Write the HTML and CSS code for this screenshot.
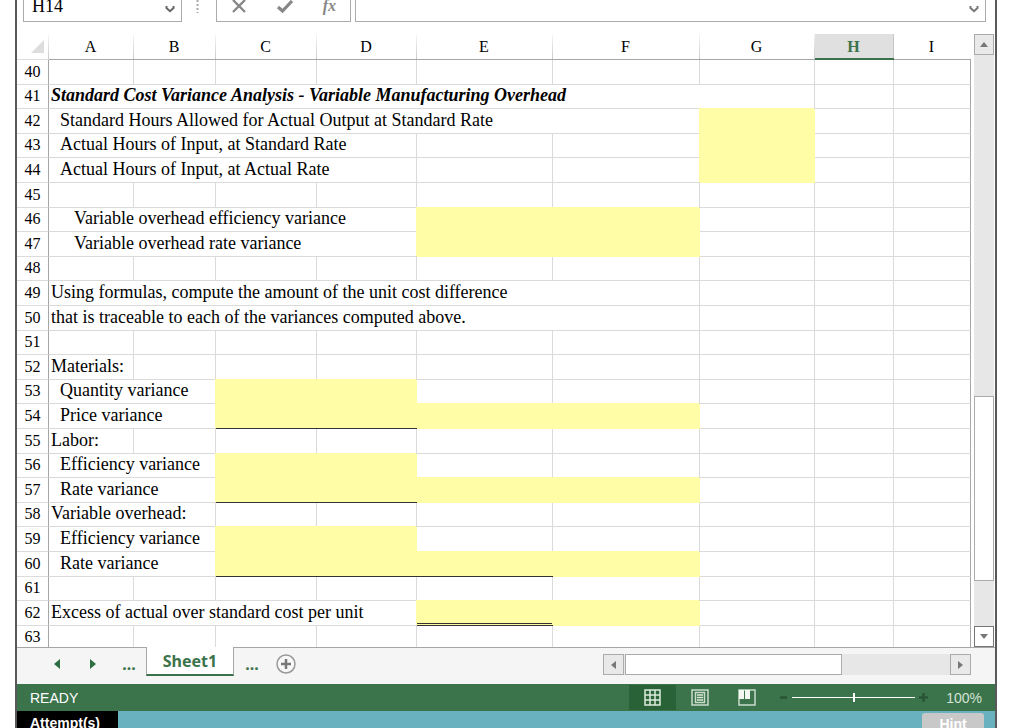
FILE: index.html
```
<!DOCTYPE html>
<html lang="en">
<head>
<meta charset="utf-8">
<title>Sheet1</title>
<meta name="viewport" content="width=device-width, initial-scale=1">
<link rel="stylesheet" href="styles.css">
</head>
<body>
<main class="window">
  <div class="formula-bar">
    <div class="name-box">
      <input class="name-input" type="text" value="H14" aria-label="Name box">
      <button class="drop" aria-label="Name list"><svg width="10" height="8" viewBox="0 0 10 8"><path d="M1.5 1v2L5 6.2 8.5 3V1" fill="none" stroke="#666" stroke-width="2"/></svg></button>
    </div>
    <svg class="grip" width="3" height="30" viewBox="0 0 3 30"><path d="M1.5 0v21" stroke="#aaa" stroke-width="2" stroke-dasharray="2 2"/></svg>
    <div class="actions">
      <button aria-label="Cancel"><svg width="16" height="16" viewBox="0 0 16 16"><path d="M2 2l12 12M14 2L2 14" stroke="#888" stroke-width="2.4"/></svg></button>
      <button aria-label="Enter"><svg width="18" height="16" viewBox="0 0 18 16"><path d="M2 9l4.500 4L16 3" fill="none" stroke="#888" stroke-width="3.200"/></svg></button>
      <button class="fx" aria-label="Insert function">fx</button>
    </div>
    <div class="formula">
      <input class="formula-input" type="text" aria-label="Formula">
      <button class="drop" aria-label="Expand formula bar"><svg width="10" height="8" viewBox="0 0 10 8"><path d="M1.500 1v2L5 6.200 8.500 3V1" fill="none" stroke="#777" stroke-width="2"/></svg></button>
    </div>
  </div>

  <div class="work">
    <div class="pane">
      <table class="sheet">
        <colgroup><col class="c-num"><col class="c-a"><col class="c-b"><col class="c-c"><col class="c-d"><col class="c-e"><col class="c-f"><col class="c-g"><col class="c-h"><col></colgroup>
        <thead>
          <tr><th class="corner"><svg width="13" height="13" viewBox="0 0 13 13"><path d="M13 0v13H0z" fill="#ddd"/></svg></th><th>A</th><th>B</th><th>C</th><th>D</th><th>E</th><th>F</th><th>G</th><th class="active">H</th><th>I</th></tr>
        </thead>
        <tbody>
          <tr><th>40</th><td></td><td></td><td></td><td></td><td></td><td></td><td></td><td></td><td></td></tr>
          <tr><th>41</th><td colspan="7" class="title">Standard Cost Variance Analysis - Variable Manufacturing Overhead</td><td></td><td></td></tr>
          <tr><th>42</th><td colspan="6" class="in1">Standard Hours Allowed for Actual Output at Standard Rate</td><td class="fill"></td><td></td><td></td></tr>
          <tr><th>43</th><td colspan="4" class="in1">Actual Hours of Input, at Standard Rate</td><td></td><td></td><td class="fill"></td><td></td><td></td></tr>
          <tr><th>44</th><td colspan="4" class="in1">Actual Hours of Input, at Actual Rate</td><td></td><td></td><td class="fill"></td><td></td><td></td></tr>
          <tr><th>45</th><td></td><td></td><td></td><td></td><td></td><td></td><td></td><td></td><td></td></tr>
          <tr><th>46</th><td colspan="4" class="in2">Variable overhead efficiency variance</td><td class="fill"></td><td class="fill"></td><td></td><td></td><td></td></tr>
          <tr><th>47</th><td colspan="4" class="in2">Variable overhead rate variance</td><td class="fill"></td><td class="fill"></td><td></td><td></td><td></td></tr>
          <tr><th>48</th><td></td><td></td><td></td><td></td><td></td><td></td><td></td><td></td><td></td></tr>
          <tr><th>49</th><td colspan="6">Using formulas, compute the amount of the unit cost difference</td><td></td><td></td><td></td></tr>
          <tr><th>50</th><td colspan="6">that is traceable to each of the variances computed above.</td><td></td><td></td><td></td></tr>
          <tr><th>51</th><td></td><td></td><td></td><td></td><td></td><td></td><td></td><td></td><td></td></tr>
          <tr><th>52</th><td>Materials:</td><td></td><td></td><td></td><td></td><td></td><td></td><td></td><td></td></tr>
          <tr><th>53</th><td colspan="2" class="in1">Quantity variance</td><td class="fill"></td><td class="fill"></td><td></td><td></td><td></td><td></td><td></td></tr>
          <tr><th>54</th><td colspan="2" class="in1">Price variance</td><td class="fill sum"></td><td class="fill sum"></td><td class="fill"></td><td class="fill"></td><td></td><td></td><td></td></tr>
          <tr><th>55</th><td>Labor:</td><td></td><td></td><td></td><td></td><td></td><td></td><td></td><td></td></tr>
          <tr><th>56</th><td colspan="2" class="in1">Efficiency variance</td><td class="fill"></td><td class="fill"></td><td></td><td></td><td></td><td></td><td></td></tr>
          <tr><th>57</th><td colspan="2" class="in1">Rate variance</td><td class="fill sum"></td><td class="fill sum"></td><td class="fill"></td><td class="fill"></td><td></td><td></td><td></td></tr>
          <tr><th>58</th><td colspan="2">Variable overhead:</td><td></td><td></td><td></td><td></td><td></td><td></td><td></td></tr>
          <tr><th>59</th><td colspan="2" class="in1">Efficiency variance</td><td class="fill"></td><td class="fill"></td><td></td><td></td><td></td><td></td><td></td></tr>
          <tr><th>60</th><td colspan="2" class="in1">Rate variance</td><td class="fill sum"></td><td class="fill sum"></td><td class="fill sum"></td><td class="fill"></td><td></td><td></td><td></td></tr>
          <tr><th>61</th><td></td><td></td><td></td><td></td><td></td><td></td><td></td><td></td><td></td></tr>
          <tr><th>62</th><td colspan="4">Excess of actual over standard cost per unit</td><td class="fill total"></td><td class="fill"></td><td></td><td></td><td></td></tr>
          <tr><th>63</th><td></td><td></td><td></td><td></td><td></td><td></td><td></td><td></td><td></td></tr>
        </tbody>
      </table>
    </div>
    <div class="vscroll">
      <button class="sb" aria-label="Scroll up"><svg width="8" height="5" viewBox="0 0 8 5"><path d="M0 5l4-5 4 5z" fill="#777"/></svg></button>
      <div class="vtrack"><div class="space-before"></div><div class="thumb"></div><div class="space-after"></div></div>
      <button class="sb end" aria-label="Scroll down"><svg width="8" height="5" viewBox="0 0 8 5"><path d="M0 0l4 5 4-5z" fill="#777"/></svg></button>
    </div>
  </div>

  <div class="tabs">
    <nav class="tab-nav">
      <button class="arrow" aria-label="Previous sheet"><svg width="6" height="10" viewBox="0 0 6 10"><path d="M6 0v10L0 5z" fill="#2f6e42"/></svg></button>
      <button class="arrow" aria-label="Next sheet"><svg width="6" height="10" viewBox="0 0 6 10"><path d="M0 0v10l6-5z" fill="#2f6e42"/></svg></button>
      <button class="more">...</button>
      <button class="tab">Sheet1</button>
      <button class="more">...</button>
      <button class="add" aria-label="New sheet"><svg width="20" height="20" viewBox="0 0 20 20"><circle cx="10" cy="10" r="9" fill="#f8f8f8" stroke="#999" stroke-width="1.500"/><path d="M10 5v10M5 10h10" stroke="#777" stroke-width="2.500"/></svg></button>
    </nav>
    <div class="hscroll">
      <button class="sb" aria-label="Scroll left"><svg width="5" height="8" viewBox="0 0 5 8"><path d="M5 0v8L0 4z" fill="#777"/></svg></button>
      <div class="htrack"><div class="thumb"></div></div>
      <button class="sb" aria-label="Scroll right"><svg width="5" height="8" viewBox="0 0 5 8"><path d="M0 0v8l5-4z" fill="#777"/></svg></button>
    </div>
  </div>

  <div class="status">
    <span class="ready">READY</span>
    <div class="views">
      <button class="on" aria-label="Normal view"><svg width="17" height="17" viewBox="0 0 17 17"><path d="M1 1h15v15H1zM6 1v15M11 1v15M1 6h15M1 11h15" fill="none" stroke="#dcebdc" stroke-width="1.500"/></svg></button>
      <button aria-label="Page layout"><svg width="18" height="17" viewBox="0 0 18 17"><path d="M1 1h16v15H1zM4.500 3.500h9v10h-9z" fill="none" stroke="#c9dccb" stroke-width="1.500"/><path d="M6 6h6M6 8.500h6M6 11h6" stroke="#dcebdc" stroke-width="1.300"/></svg></button>
      <button aria-label="Page break preview"><svg width="18" height="17" viewBox="0 0 18 17"><path d="M1 1h16v15H1z" fill="none" stroke="#c9dccb" stroke-width="1.500"/><path d="M1 1h5v9H1zM7 1h5v9H7z" fill="#f2f7f2"/></svg></button>
    </div>
    <div class="zoom">
      <button aria-label="Zoom out"><svg width="9" height="9" viewBox="0 0 9 9"><path d="M1 4.500h7" stroke="#285635" stroke-width="2.500"/></svg></button>
      <input type="range" min="0" max="100" value="50" aria-label="Zoom">
      <button aria-label="Zoom in"><svg width="9" height="9" viewBox="0 0 9 9"><path d="M0 4.500h9M4.500 0v9" stroke="#285635" stroke-width="2.500"/></svg></button>
    </div>
    <span class="percent">100%</span>
  </div>

  <div class="footer">
    <span class="attempts">Attempt(s)</span>
    <button class="hint">Hint</button>
  </div>
</main>
</body>
</html>
```
FILE: styles.css
```
* { box-sizing: border-box; }
body { margin: 0; background: #fff; color: #000; font-family: "Liberation Serif", "Times New Roman", serif; }
button { border: 0; padding: 0; background: none; font: inherit; color: inherit; display: flex; align-items: center; justify-content: center; cursor: pointer; }
input { border: 0; padding: 0; margin: 0; background: none; font: inherit; min-width: 0; outline: 0; }
svg { display: block; flex: none; }

.window { height: 100vh; margin: 0 27px 0 15px; border: solid #58595b; border-width: 0 2px 0 2px; display: flex; flex-direction: column; overflow: hidden; }

.formula-bar { flex: none; height: 22px; display: flex; align-items: flex-end; overflow: hidden; padding: 0 9px 0 6px; }
.name-box, .actions, .formula { height: 32px; border: 1px solid #ababab; display: flex; align-items: center; }
.name-box { width: 159px; padding: 0 6px 0 8px; }
.name-input { flex: 1; font-size: 18px; }
.name-box .drop, .formula .drop { padding-top: 5px; }
.grip { margin: 0 17px 0 14px; }
.actions { width: 135px; justify-content: space-between; padding: 0 14px; }
.fx { font-size: 16px; font-weight: bold; font-style: italic; color: #888; }
.formula { flex: 1; margin-left: 4px; padding-right: 6px; }
.formula-input { flex: 1; }

.work { flex: 1; min-height: 0; display: flex; gap: 3px; padding-top: 12px; padding-right: 1px; }
.pane { flex: 1; min-width: 0; overflow: hidden; }
.sheet { width: 100%; table-layout: fixed; border-collapse: separate; border-spacing: 0; }
.c-num { width: 32px; }
.c-a { width: 85px; }
.c-b { width: 82px; }
.c-c { width: 101px; }
.c-d { width: 100px; }
.c-e { width: 136px; }
.c-f { width: 147px; }
.c-g { width: 115px; }
.c-h { width: 79px; }
.sheet th { font-weight: normal; font-size: 16px; line-height: 20px; padding: 0; text-align: center; }
.sheet thead th { height: 26px; padding-right: 2px; border-bottom: 1px solid #a6a6a6; background: linear-gradient(#f6f6f6, #ccc) right / 1px 100% no-repeat; }
.sheet thead th:last-child { background: none; }
.sheet thead .corner { border-bottom-color: #ddd; }
.corner svg { margin: 0 3px 0 auto; }
.sheet thead .active { background: #e0e0e0; color: #3b734b; font-weight: bold; box-shadow: inset 0 -1px 0 #3b734b, inset -1px 0 0 #c6c6c6; border-bottom-color: #3b734b; }
.sheet tbody tr { height: 25px; }
.sheet tbody tr:nth-child(5n+2), .sheet tbody tr:nth-child(5n+4) { height: 24px; }
.sheet tbody th { border: solid #dcdcdc; border-width: 0 1px 1px 0; border-right-color: #a6a6a6; padding-bottom: 1px; }
.sheet td { border: solid #dadada; border-width: 0 1px 1px 0; padding: 0 0 3px 2px; font-size: 18px; line-height: 20px; white-space: nowrap; }
.sheet td:last-child { border-right-color: #a6a6a6; }
.sheet .title { font-weight: bold; font-style: italic; }
.sheet .in1 { padding-left: 11px; }
.sheet .in2 { padding-left: 25px; }
.sheet .fill { background: #fffda6; border-color: #fffda6; box-shadow: -1px -1px 0 #fffda6; }
.sheet .sum { border-right-width: 0; border-bottom-color: #333; }
.sheet .total { border-right-width: 0; border-bottom: 3px double #333; }

.sb { flex: none; width: 21px; height: 21px; border: 1px solid #ababab; background: #e9e9e9; }
.sb.end { background: #fff; border-color: #777; }
.thumb { background: #fff; border: 1px solid #ababab; }
.vscroll { flex: none; width: 20px; display: flex; flex-direction: column; background: #e7e7e7; }
.vscroll .sb { width: 100%; }
.vtrack { flex: 1; display: flex; flex-direction: column; }
.space-before { flex: 342; }
.vtrack .thumb { flex: 184; }
.space-after { flex: 45; }

.tabs { flex: none; height: 37px; background: #f5f5f5; border-top: 1px solid #a6a6a6; display: flex; justify-content: space-between; padding-right: 24px; color: #3b734b; }
.tab-nav { display: flex; align-items: flex-start; padding-left: 37px; font-family: "Noto Sans", "Open Sans", sans-serif; font-weight: bold; }
.arrow { width: 6px; height: 32px; margin-right: 30px; }
.more { width: 14px; height: 32px; font-size: 16px; }
.arrow + .more { margin: 0 10px 0 0; }
.arrow:nth-child(2) { margin-right: 26px; }
.tab { width: 88px; height: 29px; margin-top: -1px; background: #fff; border: solid #a6a6a6; border-width: 0 1px 2px 1px; border-bottom-color: #3b734b; font-size: 16px; line-height: 20px; }
.tab + .more { margin: 0 17px 0 11px; }
.add { height: 32px; }
.hscroll { width: 368px; height: 21px; margin-top: 6px; display: flex; background: #e7e7e7; }
.htrack { flex: 1; display: flex; padding-left: 1px; }
.htrack .thumb { width: 217px; }

.status { flex: none; height: 27px; background: #3b734b; color: #fff; display: flex; align-items: center; padding: 0 13px; font-family: "Liberation Sans", Arial, sans-serif; font-size: 14px; }
.ready { flex: 1; }
.views { display: flex; }
.views button { width: 47px; height: 25px; }
.views .on { background: #2a6237; }
.zoom { display: flex; align-items: center; gap: 4px; margin: 0 18px 0 9px; }
.zoom input { appearance: none; width: 123px; height: 9px; background: linear-gradient(#fff, #fff) center / 100% 1px no-repeat; }
.zoom input::-webkit-slider-thumb { appearance: none; width: 2px; height: 9px; background: #fff; }
.percent { color: #d3e3d6; }

.footer { flex: none; height: 17px; background: #69b1bf; color: #fff; display: flex; align-items: flex-start; justify-content: space-between; overflow: hidden; padding-right: 11px; font-family: "Liberation Sans", Arial, sans-serif; font-weight: bold; font-size: 14px; line-height: 24px; }
.attempts { background: #000; width: 101px; padding-left: 13px; }
.hint { width: 62px; height: 22px; margin-top: 2px; background: #c8c8c8; border-radius: 3px; }
```
